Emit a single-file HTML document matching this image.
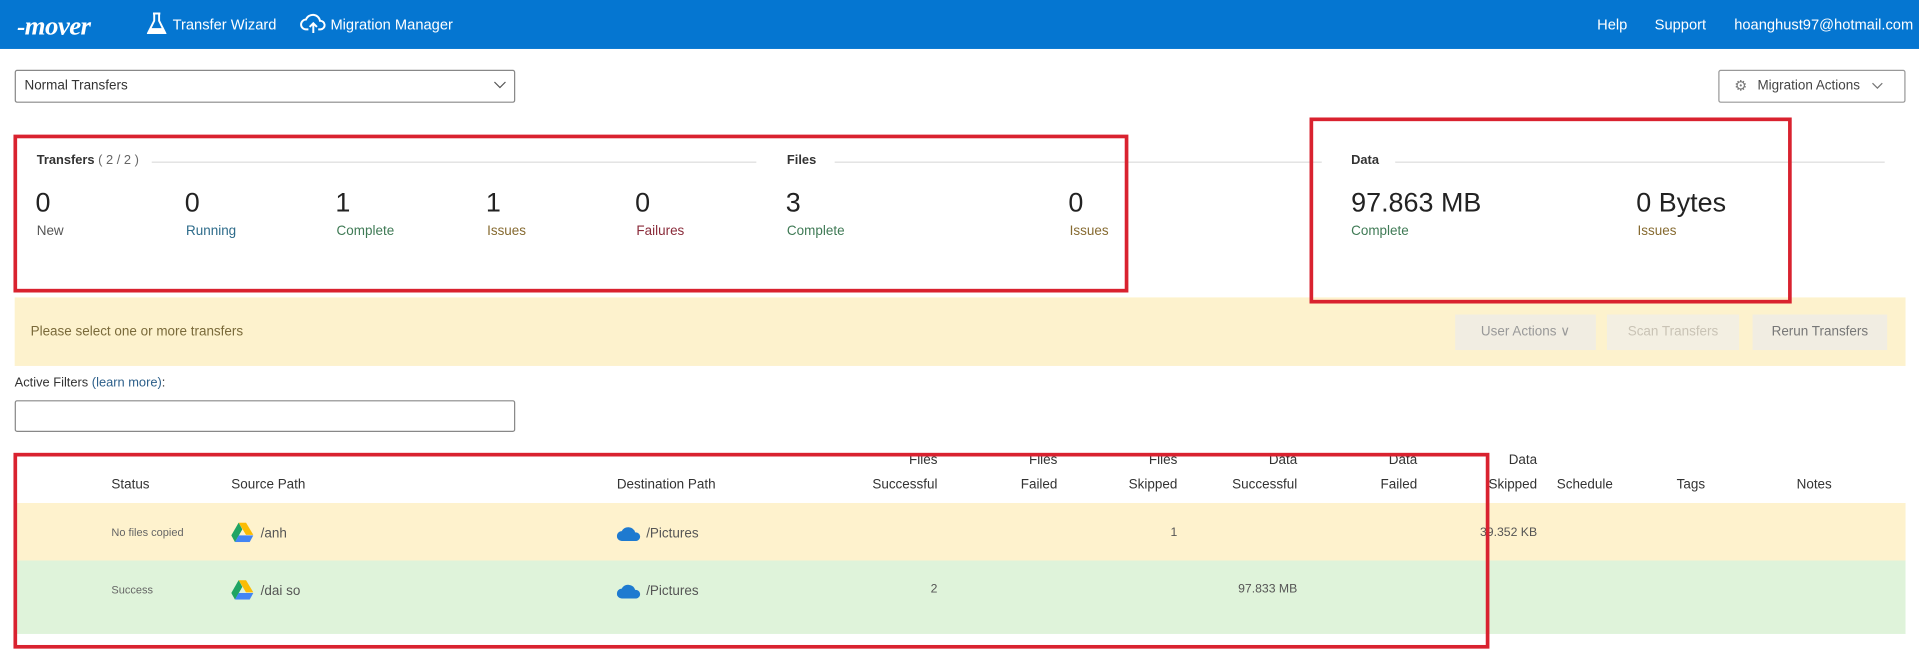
<!DOCTYPE html>
<html><head><meta charset="utf-8"><style>
*{box-sizing:border-box;margin:0;padding:0}
html,body{width:1919px;height:618px;overflow:hidden;background:#fff}
#w{position:absolute;left:0;top:0;width:1568px;height:505px;transform:scale(1.22385);transform-origin:0 0;font-family:"Liberation Sans",sans-serif;color:#333;font-size:12px}
.a{position:absolute;white-space:nowrap}
.hdr{position:absolute;left:0;top:0;width:1568px;height:40px;background:#0576d1;color:#fff;font-size:12px}
.red{position:absolute;border:3px solid #d9222f}
.num{position:absolute;font-size:22px;color:#222;top:153px}
.lbl{position:absolute;font-size:11px;top:183px}
.th{position:absolute;font-size:11px;color:#333;text-align:right}
.line{position:absolute;height:1px;background:#ddd}
</style></head><body><div id="w">
<div class="hdr">
 <div class="a" style="left:14px;top:8px;font:italic bold 20px 'Liberation Serif',serif;letter-spacing:-0.5px">-<span style="font-size:22px">mover</span></div>
 <svg class="a" style="left:120px;top:10px" width="16" height="19" viewBox="0 0 16 19"><path d="M5 1h6M6 1v6L1 17h14L10 7V1" fill="none" stroke="#fff" stroke-width="1.6"/><path d="M3.5 13h9l2 4H1.5z" fill="#fff"/></svg>
 <div class="a" style="left:141px;top:13px">Transfer Wizard</div>
 <svg class="a" style="left:245px;top:10px" width="22" height="18" viewBox="0 0 22 18"><path d="M7 14H5a4 4 0 0 1 0-8 6 6 0 0 1 11.5 1A3.5 3.5 0 0 1 17 14h-2" fill="none" stroke="#fff" stroke-width="1.6"/><path d="M11 17V9M8 12l3-3 3 3" fill="none" stroke="#fff" stroke-width="1.6"/></svg>
 <div class="a" style="left:270px;top:13px">Migration Manager</div>
 <div class="a" style="left:1305px;top:13px">Help</div>
 <div class="a" style="left:1352px;top:13px">Support</div>
 <div class="a" style="left:1417px;top:13px">hoanghust97@hotmail.com</div>
</div>
<div class="a" style="left:12px;top:57px;width:409px;height:27px;border:1px solid #888;border-radius:2px"></div>
<div class="a" style="left:20px;top:64px;font-size:11px">Normal Transfers</div>
<svg class="a" style="left:403px;top:66px" width="11" height="7"><path d="M1 1l4.5 4.5L10 1" fill="none" stroke="#555"/></svg>
<div class="a" style="left:1404px;top:57px;width:153px;height:27px;border:1px solid #999;border-radius:2px"></div>
<div class="a" style="left:1417px;top:63px;font-size:12px;color:#777">⚙</div>
<div class="a" style="left:1436px;top:64px;font-size:11px;color:#444">Migration Actions</div>
<svg class="a" style="left:1529px;top:67px" width="10" height="6"><path d="M1 1l4 4 4-4" fill="none" stroke="#777"/></svg>

<div class="a" style="left:30px;top:125px;font-size:10.5px;font-weight:bold">Transfers <span style="font-weight:normal;color:#666">( 2 / 2 )</span></div>
<div class="line" style="left:124px;top:132px;width:494px"></div>
<div class="a" style="left:643px;top:125px;font-size:10.5px;font-weight:bold">Files</div>
<div class="line" style="left:682px;top:132px;width:398px"></div>
<div class="a" style="left:1104px;top:125px;font-size:10.5px;font-weight:bold">Data</div>
<div class="line" style="left:1140px;top:132px;width:400px"></div>

<div class="num" style="left:29px">0</div><div class="lbl" style="left:30px;color:#555">New</div>
<div class="num" style="left:151px">0</div><div class="lbl" style="left:152px;color:#2d6b8a">Running</div>
<div class="num" style="left:274px">1</div><div class="lbl" style="left:275px;color:#3f7a55">Complete</div>
<div class="num" style="left:397px">1</div><div class="lbl" style="left:398px;color:#866a30">Issues</div>
<div class="num" style="left:519px">0</div><div class="lbl" style="left:520px;color:#8a2b3a">Failures</div>
<div class="num" style="left:642px">3</div><div class="lbl" style="left:643px;color:#3f7a55">Complete</div>
<div class="num" style="left:873px">0</div><div class="lbl" style="left:874px;color:#866a30">Issues</div>
<div class="num" style="left:1104px">97.863 MB</div><div class="lbl" style="left:1104px;color:#3f7a55">Complete</div>
<div class="num" style="left:1337px">0 Bytes</div><div class="lbl" style="left:1338px;color:#866a30">Issues</div>

<div class="a" style="left:12px;top:243px;width:1545px;height:56px;background:#fdf2cd"></div>
<div class="a" style="left:25px;top:265px;font-size:11px;color:#7a6a3a">Please select one or more transfers</div>
<div class="a" style="left:1189px;top:257px;width:115px;height:29px;background:#f1ede2;color:#999;font-size:11px;text-align:center;line-height:29px">User Actions ∨</div>
<div class="a" style="left:1313px;top:257px;width:108px;height:29px;background:#f3efe2;color:#c9c3b5;font-size:11px;text-align:center;line-height:29px">Scan Transfers</div>
<div class="a" style="left:1432px;top:257px;width:110px;height:29px;background:#f1ede2;color:#777;font-size:11px;text-align:center;line-height:29px">Rerun Transfers</div>

<div class="a" style="left:12px;top:307px;font-size:10.5px">Active Filters <span style="color:#2c5f8a">(learn more)</span>:</div>
<div class="a" style="left:12px;top:327px;width:409px;height:26px;border:1px solid #888;border-radius:2px"></div>

<div class="a" style="left:12px;top:411px;width:1545px;height:47px;background:#fef2cd"></div>
<div class="a" style="left:12px;top:458px;width:1545px;height:60px;background:#dff3da"></div>

<div class="th" style="left:700px;top:370px;width:66px">Files</div>
<div class="th" style="left:798px;top:370px;width:66px">Files</div>
<div class="th" style="left:896px;top:370px;width:66px">Files</div>
<div class="th" style="left:994px;top:370px;width:66px">Data</div>
<div class="th" style="left:1092px;top:370px;width:66px">Data</div>
<div class="th" style="left:1190px;top:370px;width:66px">Data</div>
<div class="a" style="left:91px;top:390px;font-size:11px">Status</div>
<div class="a" style="left:189px;top:390px;font-size:11px">Source Path</div>
<div class="a" style="left:504px;top:390px;font-size:11px">Destination Path</div>
<div class="th" style="left:680px;top:390px;width:86px">Successful</div>
<div class="th" style="left:798px;top:390px;width:66px">Failed</div>
<div class="th" style="left:896px;top:390px;width:66px">Skipped</div>
<div class="th" style="left:974px;top:390px;width:86px">Successful</div>
<div class="th" style="left:1092px;top:390px;width:66px">Failed</div>
<div class="th" style="left:1190px;top:390px;width:66px">Skipped</div>
<div class="a" style="left:1272px;top:390px;font-size:11px">Schedule</div>
<div class="a" style="left:1370px;top:390px;font-size:11px">Tags</div>
<div class="a" style="left:1468px;top:390px;font-size:11px">Notes</div>

<svg class="a" style="left:189px;top:427px" width="18" height="16" viewBox="0 0 18 16"><path d="M6 0h6l6 10h-6z" fill="#fbbc04"/><path d="M6 0l3 5.5L3 16 0 10.5z" fill="#1fa463"/><path d="M3 16l3-5.5h12L15 16z" fill="#4285f4"/></svg>
<div class="a" style="left:213px;top:430px;font-size:11px;color:#555">/anh</div>
<svg class="a" style="left:189px;top:474px" width="18" height="16" viewBox="0 0 18 16"><path d="M6 0h6l6 10h-6z" fill="#fbbc04"/><path d="M6 0l3 5.5L3 16 0 10.5z" fill="#1fa463"/><path d="M3 16l3-5.5h12L15 16z" fill="#4285f4"/></svg>
<div class="a" style="left:213px;top:477px;font-size:11px;color:#555">/dai so</div>
<svg class="a" style="left:504px;top:430px" width="20" height="12" viewBox="0 0 20 12"><path d="M4 12a4 4 0 0 1 0-8 6 6 0 0 1 11 1 3.5 3.5 0 0 1 1 7z" fill="#1e7ad0"/></svg>
<div class="a" style="left:528px;top:430px;font-size:11px;color:#555">/Pictures</div>
<svg class="a" style="left:504px;top:477px" width="20" height="12" viewBox="0 0 20 12"><path d="M4 12a4 4 0 0 1 0-8 6 6 0 0 1 11 1 3.5 3.5 0 0 1 1 7z" fill="#1e7ad0"/></svg>
<div class="a" style="left:528px;top:477px;font-size:11px;color:#555">/Pictures</div>
<div class="a" style="left:91px;top:430px;font-size:9px;color:#666">No files copied</div>
<div class="a" style="left:91px;top:477px;font-size:9px;color:#666">Success</div>
<div class="th" style="left:896px;top:430px;width:66px;font-size:10px;color:#555">1</div>
<div class="th" style="left:1160px;top:430px;width:96px;font-size:10px;color:#555">39.352 KB</div>
<div class="th" style="left:700px;top:476px;width:66px;font-size:10px;color:#555">2</div>
<div class="th" style="left:974px;top:476px;width:86px;font-size:10px;color:#555">97.833 MB</div>

<div class="red" style="left:11px;top:110px;width:911px;height:129px"></div>
<div class="red" style="left:1070px;top:96px;width:394px;height:152px"></div>
<div class="red" style="left:11px;top:370px;width:1206px;height:160px"></div>
</div></body></html>
